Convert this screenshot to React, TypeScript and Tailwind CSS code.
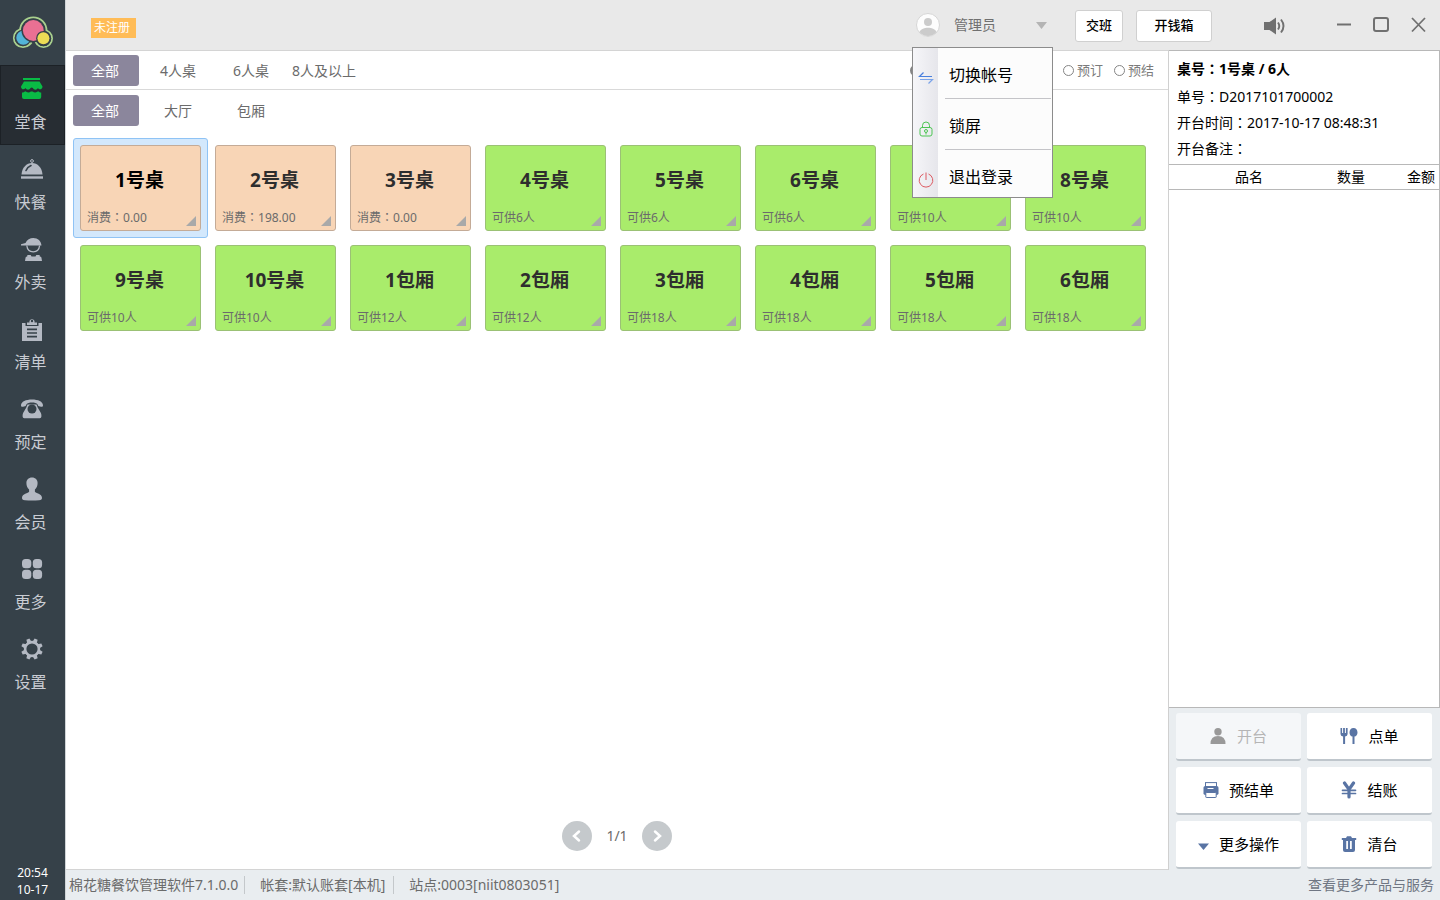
import React, { useState } from "react";

type IconProps = { className?: string };

const FONT = "font-['Noto_Sans','Noto_Sans_CJK_SC',sans-serif]";

/* ---------- sidebar icons ---------- */

const Logo = () => (
  <svg width="42" height="34" viewBox="0 0 42 34" aria-hidden="true">
    <g fill="#364149" stroke="#a9d08e" strokeWidth="1.8">
      <circle cx="11" cy="22" r="9.2" />
      <circle cx="31.5" cy="22.5" r="8.6" />
      <circle cx="21.3" cy="14.5" r="13.2" />
    </g>
    <circle cx="11" cy="22" r="8.3" fill="#364149" />
    <circle cx="31.5" cy="22.5" r="7.7" fill="#364149" />
    <rect x="18" y="24" width="7.5" height="6" fill="#364149" />
    <path d="M19.6 26.5a9.2 9.2 0 0 1-2.2 2.3M23.6 26a8.6 8.6 0 0 0 2.2 3" fill="none" stroke="#a9d08e" strokeWidth="1.8" />
    <circle cx="11.3" cy="21.8" r="7" fill="#52b4d8" />
    <circle cx="21.3" cy="14.5" r="11.8" fill="#364149" />
    <circle cx="21.3" cy="14.5" r="10.4" fill="#ea7093" />
    <circle cx="31.4" cy="22.2" r="7.3" fill="#364149" />
    <circle cx="31.4" cy="22.2" r="6" fill="#ecdc55" />
  </svg>
);

const ShopIcon = () => (
  <g>
    <path d="M3 1h17v2H3z" />
    <path d="M4 4.4h15.5l3 5.1c0 3-3.2 3.8-4.6 1.6-1 2.3-4 2.3-5 0l-1.2-.6-1.2.6c-1 2.3-4 2.3-5 0C4 13.3 1 12.500 1 9.500z" />
    <path d="M2 15.500c1.200 0 2.400-.4 3.200-1.200 1.800 1.500 4.200 1.500 5.600.2h1.800c1.400 1.300 4 1.300 5.600-.2.800.8 2 1.200 3 1.200V20q0 2-2 2H4q-2 0-2-2z" />
  </g>
);

const BellIcon = () => (
  <g>
    <circle cx="12" cy="4" r="1.400" fill="none" stroke="currentColor" />
    <path d="M1.500 17.500C2 10.500 6.500 6 12 6s10 4.500 10.500 11.500z" />
    <path d="M6 13.500q1.500-3.500 5-5" fill="none" stroke="#364149" strokeWidth="1.600" strokeLinecap="round" />
    <path d="M1 19.300h22v2.400H1z" />
  </g>
);

const CourierIcon = () => (
  <g>
    <path d="M1 8.600V7.300L5.500 6C7 2.500 10 1 13.300 1c4.500 0 8 3 8.200 7.600z" />
    <path d="M6.800 8.500c.4 4 3 6.300 6.400 6.300s6-2.300 6.400-6.300" fill="none" stroke="currentColor" strokeWidth="1.300" />
    <path d="M5 24l.6-3.500q.3-1 1.600-1l.2-1.500h3.300l.8 1.500h4l.8-1.500h3.300l.2 1.500q1.300 0 1.600 1L22 24z" />
  </g>
);

const ClipboardIcon = () => (
  <g>
    <path d="M2 6h3.500v3h13V6H22v18H2z" />
    <path d="M7 8V5.500h2.500a2.600 2.600 0 1 1 5 0H17V8z" />
    <circle cx="12" cy="4" r="1.200" fill="#364149" />
    <path d="M7 12.300h10M7 16h10M7 19.700h10" stroke="#364149" strokeWidth="1.700" />
  </g>
);

const PhoneIcon = () => (
  <g>
    <path d="M1 8.500C1 4.500 6 2.500 12 2.500s11 2 11 6c0 1-.8 1.500-2 1.200l-2-.5c-.9-.3-1.300-.8-1.300-1.700C16.500 6 14.500 5.500 12 5.500S7.500 6 6.300 7.500c0 .9-.4 1.400-1.300 1.700l-2 .5C1.800 10 1 9.500 1 8.500z" />
    <path d="M7.500 7.500h9l1.200 3 3.200 5.500q.5 1 .5 2.500v1q0 1.700-1.700 1.700H4.300q-1.700 0-1.700-1.700v-1q0-1.500.5-2.500l3.200-5.500z" />
    <circle cx="12" cy="12" r="4.500" fill="#364149" />
  </g>
);

const MemberIcon = () => (
  <path d="M12 .5c3.500 0 5.600 2.400 5.600 5.500 0 2.700-1 5-2.700 6.500v2.300c.7 1.500 7.100 2 7.100 6 0 1.500-.6 2.300-3 2.500-4.500.3-9.500.3-14 0-2.400-.2-3-1-3-2.500 0-4 6.400-4.500 7.100-6v-2.300C7.400 11 6.400 8.700 6.400 6 6.400 2.900 8.500.5 12 .5z" />
);

const MoreIcon = () => (
  <g>
    <rect x="2" y="2" width="9.300" height="9.300" rx="3.500" />
    <rect x="12.800" y="2" width="9.300" height="9.300" rx="3.500" />
    <rect x="2" y="12.800" width="9.300" height="9.300" rx="3.500" />
    <rect x="12.800" y="12.800" width="9.300" height="9.300" rx="3.500" />
  </g>
);

const GearIcon = () => (
  <g>
    <circle cx="12" cy="12" r="6.900" fill="none" stroke="currentColor" strokeWidth="2.600" />
    {[22.5, 67.5, 112.5, 157.5, 202.5, 247.5, 292.5, 337.5].map((a) => (
      <path key={a} d="M9.700 5.200l.7-4h3.200l.7 4z" transform={`rotate(${a} 12 12)`} />
    ))}
  </g>
);

const NAV: { label: string; icon: () => React.ReactElement }[] = [
  { label: "堂食", icon: ShopIcon },
  { label: "快餐", icon: BellIcon },
  { label: "外卖", icon: CourierIcon },
  { label: "清单", icon: ClipboardIcon },
  { label: "预定", icon: PhoneIcon },
  { label: "会员", icon: MemberIcon },
  { label: "更多", icon: MoreIcon },
  { label: "设置", icon: GearIcon },
];

function Sidebar() {
  const [active, setActive] = useState("堂食");
  return (
    <aside className="flex w-[65px] shrink-0 flex-col bg-[#364149]">
      <div className="flex h-[65px] items-center justify-center">
        <Logo />
      </div>
      <nav className="flex flex-col">
        {NAV.map(({ label, icon: Icon }) => {
          const on = label === active;
          return (
            <button
              key={label}
              type="button"
              onClick={() => setActive(label)}
              className={
                on
                  ? "flex h-20 flex-col items-center gap-[9px] border border-[#1c2126] bg-[#272d33] pt-[11px] pr-[2px] text-[#c9ccd3]"
                  : "flex h-20 flex-col items-center gap-[9px] border border-transparent pt-[11px] pr-[2px] text-[#c9ccd3]"
              }
            >
              <svg
                width="24"
                height="24"
                viewBox="0 0 24 24"
                fill="currentColor"
                aria-hidden="true"
                className={on ? "text-[#09bb45]" : "text-[#b4b9c3]"}
              >
                <Icon />
              </svg>
              <span className="pr-[2px] text-base leading-6">{label}</span>
            </button>
          );
        })}
      </nav>
      <div className="mt-auto pb-[2px] text-center text-xs leading-[17px] text-white">
        <div>20:54</div>
        <div>10-17</div>
      </div>
    </aside>
  );
}

/* ---------- header ---------- */

const SwapIcon = () => (
  <svg width="16" height="16" viewBox="0 0 16 16" fill="none" strokeWidth="1.200" aria-hidden="true">
    <path d="M14 6.500H1.500L5.500 2.500" stroke="#4a80dd" />
    <path d="M2 9.500h12.500l-4 4" stroke="#7aa4ea" />
  </svg>
);

const LockIcon = () => (
  <svg width="16" height="16" viewBox="0 0 16 16" fill="none" stroke="#4cc552" aria-hidden="true">
    <rect x="2" y="6.500" width="12" height="8.500" rx="2" />
    <path d="M4.500 6.500V4.500a3.500 3.500 0 0 1 7 0v2" />
    <circle cx="8" cy="10" r="1.500" />
    <path d="M8 11.500v2" />
  </svg>
);

const PowerIcon = () => (
  <svg width="16" height="16" viewBox="0 0 16 16" fill="none" stroke="#dc5a62" aria-hidden="true">
    <path d="M5.500 2a6.800 6.800 0 1 0 5 0M8 .5v7.500" />
  </svg>
);

const MENU = [
  { label: "切换帐号", icon: SwapIcon },
  { label: "锁屏", icon: LockIcon },
  { label: "退出登录", icon: PowerIcon },
];

function UserMenu() {
  return (
    <div className="relative w-[141px]">
      <button type="button" className="flex h-[50px] w-full items-center pr-[6px] pl-1 text-sm text-[#707070]">
        <svg width="24" height="24" viewBox="0 0 24 24" aria-hidden="true">
          <circle cx="12" cy="12" r="11.500" fill="#fdfdfd" stroke="#d6d6d6" />
          <circle cx="12" cy="9" r="4" fill="#cbcbcb" />
          <path d="M3.500 19C5 15.800 8.500 14.800 12 14.800s7 1 8.500 4.200a11 11 0 0 1-17 0z" fill="#cbcbcb" />
        </svg>
        <span className="ml-[14px]">管理员</span>
        <svg className="ml-auto" width="11" height="7" viewBox="0 0 11 7" fill="#b4b4b4" aria-hidden="true">
          <path d="M0 0h11L5.500 7z" />
        </svg>
      </button>
      <ul className="absolute top-[47px] left-0 z-10 w-[141px] border border-[#8c8c8c] bg-[#fcfcfc] font-['Noto_Sans_CJK_SC',sans-serif]">
        {MENU.map(({ label, icon: Icon }, i) => (
          <li key={label} className="pr-px">
            <button type="button" className="flex w-full text-left text-base leading-6 text-black">
              <span className="flex w-[25px] justify-center bg-linear-to-r from-[#f6f6f9] to-[#e6e6eb] pt-[22px]">
                <Icon />
              </span>
              <span
                className={
                  i < MENU.length - 1
                    ? "ml-[7px] h-[51px] flex-1 border-b border-[#c4c4c8] pt-[14px] pl-1"
                    : "ml-[7px] h-[47px] flex-1 pt-[14px] pl-1"
                }
              >
                {label}
              </span>
            </button>
          </li>
        ))}
      </ul>
    </div>
  );
}

function Header() {
  return (
    <header className="flex h-[50px] shrink-0 items-center bg-[#e9e9e9] pr-3 pl-[25px]">
      <span className="mt-[6px] flex h-5 w-[45px] items-center bg-[#ffbc57] pl-[3px] text-xs text-white">未注册</span>
      <div className="ml-auto flex items-center">
        <UserMenu />
        <button type="button" className="mt-[2px] ml-[22px] h-8 w-12 rounded-[3px] border border-[#d0d0d0] bg-white text-[13px] font-medium text-black">
          交班
        </button>
        <button type="button" className="mt-[2px] ml-[13px] h-8 w-[76px] rounded-[3px] border border-[#d0d0d0] bg-white text-[13px] font-medium text-black">
          开钱箱
        </button>
        <button type="button" aria-label="音量" className="mt-[2px] ml-[51px]">
          <svg width="24" height="20" viewBox="0 0 24 20" aria-hidden="true">
            <path d="M1 6h5.500L13 1.500v17L6.500 14H1z" fill="#707070" />
            <path d="M15 6.500q2.500 3.500 0 7M18 3.500q5 6.500 0 13" fill="none" stroke="#707070" strokeWidth="1.900" />
          </svg>
        </button>
        <button type="button" aria-label="最小化" className="ml-[49px]">
          <svg width="16" height="18" viewBox="0 0 16 18" aria-hidden="true">
            <path d="M1 8.500h14" stroke="#707070" strokeWidth="2" />
          </svg>
        </button>
        <button type="button" aria-label="最大化" className="ml-[20px]">
          <svg width="18" height="18" viewBox="0 0 18 18" aria-hidden="true">
            <rect x="2" y="2" width="14" height="13" rx="2" fill="none" stroke="#707070" strokeWidth="2" />
          </svg>
        </button>
        <button type="button" aria-label="关闭" className="ml-[20px]">
          <svg width="18" height="18" viewBox="0 0 18 18" aria-hidden="true">
            <path d="M2 2l13 13.500M15 2L2 15.500" stroke="#707070" strokeWidth="1.800" />
          </svg>
        </button>
      </div>
    </header>
  );
}

/* ---------- table floor ---------- */

function Tabs({ items }: { items: string[] }) {
  const [active, setActive] = useState(0);
  return (
    <div className="flex gap-[7px]">
      {items.map((t, i) => (
        <button
          key={t}
          type="button"
          onClick={() => setActive(i)}
          className={
            i === active
              ? "h-[31px] w-[66px] rounded-[3px] bg-[#8b869c] pr-[2px] text-sm whitespace-nowrap text-white"
              : "h-[31px] w-[66px] rounded-[3px] pr-[2px] text-sm whitespace-nowrap text-[#6b6b6b]"
          }
        >
          {t}
        </button>
      ))}
    </div>
  );
}

const RADIO =
  "h-[11px] w-[11px] appearance-none rounded-full border border-[#858585] bg-white checked:border-[3px]";

/* The full-width colon sits in the middle of its box in the JP face. */
const Colon = () => <span className="font-['Noto_Sans_CJK_JP',sans-serif] leading-none" lang="ja">：</span>;

type Table = { name: string; spent?: string; seats?: number };

const TABLES: Table[] = [
  { name: "1号桌", spent: "0.00" },
  { name: "2号桌", spent: "198.00" },
  { name: "3号桌", spent: "0.00" },
  { name: "4号桌", seats: 6 },
  { name: "5号桌", seats: 6 },
  { name: "6号桌", seats: 6 },
  { name: "7号桌", seats: 10 },
  { name: "8号桌", seats: 10 },
  { name: "9号桌", seats: 10 },
  { name: "10号桌", seats: 10 },
  { name: "1包厢", seats: 12 },
  { name: "2包厢", seats: 12 },
  { name: "3包厢", seats: 18 },
  { name: "4包厢", seats: 18 },
  { name: "5包厢", seats: 18 },
  { name: "6包厢", seats: 18 },
];

function TableCard({ table, selected, onSelect }: { table: Table; selected: boolean; onSelect: () => void }) {
  return (
    <button
      type="button"
      onClick={onSelect}
      className={
        selected
          ? "h-[100px] w-[135px] rounded-[3px] border border-[#8fc3f5] bg-[#d3e8fc] p-[6px] text-black"
          : "h-[100px] w-[135px] rounded-[3px] border border-transparent p-[6px] text-[#2e2e2e]"
      }
    >
      <span
        className={
          table.spent
            ? "flex h-full flex-col rounded-[3px] border border-[#c4ab97] bg-[#f8d5b6]"
            : "flex h-full flex-col rounded-[3px] border border-[#9bc175] bg-[#a9ec6b]"
        }
      >
        <span className="pt-5 pr-[2px] text-center text-[19px] leading-7 font-bold">{table.name}</span>
        <span className="mt-auto flex items-end justify-between pr-1 pb-1 pl-[6px] text-xs leading-4 text-[#6b6b6b]">
          <span>
            {table.spent ? (
              <>
                消费
                <Colon />
                {table.spent}
              </>
            ) : (
              `可供${table.seats}人`
            )}
          </span>
          <svg width="10" height="10" viewBox="0 0 10 10" fill="#a9a9a9" aria-hidden="true">
            <path d="M10 0v10H0z" />
          </svg>
        </span>
      </span>
    </button>
  );
}

function PageButton({ label, d }: { label: string; d: string }) {
  return (
    <button type="button" aria-label={label} className="flex h-[30px] w-[30px] items-center justify-center rounded-full bg-[#c5c9cc]">
      <svg width="14" height="14" viewBox="0 0 14 14" fill="none" stroke="#fff" strokeWidth="2.500" strokeLinecap="round" aria-hidden="true">
        <path d={d} />
      </svg>
    </button>
  );
}

function Floor() {
  const [selected, setSelected] = useState(0);
  return (
    <main className="flex min-w-0 flex-1 flex-col border-t border-b border-[#d4d4d4] bg-white">
      <div className="flex items-center justify-between border-b border-[#d9d9d9] pt-1 pr-[14px] pb-[3px] pl-[7px]">
        <Tabs items={["全部", "4人桌", "6人桌", "8人及以上"]} />
        <fieldset className="flex items-center text-[13px] text-[#7b7b7b]">
          <input type="radio" name="state" defaultChecked aria-label="全部" className={`${RADIO} mr-[142px]`} />
          <label className="flex items-center gap-[3px]">
            <input type="radio" name="state" className={RADIO} />
            预订
          </label>
          <label className="ml-[11px] flex items-center gap-[3px]">
            <input type="radio" name="state" className={RADIO} />
            预结
          </label>
        </fieldset>
      </div>
      <div className="pt-[5px] pl-[7px]">
        <Tabs items={["全部", "大厅", "包厢"]} />
      </div>
      <div className="flex flex-1 flex-wrap content-start pt-3 pr-[7px] pl-[7px]">
        {TABLES.map((t, i) => (
          <TableCard key={t.name} table={t} selected={i === selected} onSelect={() => setSelected(i)} />
        ))}
      </div>
      <div className="flex items-center justify-center gap-[14px] pb-[18px] text-sm text-[#6b6b6b]">
        <PageButton label="上一页" d="M9 2.500L4 7l5 4.500" />
        <span>1/1</span>
        <PageButton label="下一页" d="M5 2.500L10 7l-5 4.500" />
      </div>
    </main>
  );
}

/* ---------- order panel ---------- */

const PersonIcon = ({ className }: IconProps) => (
  <svg className={className} width="16" height="16" viewBox="0 0 16 16" fill="currentColor" aria-hidden="true">
    <circle cx="8" cy="3.700" r="3.700" />
    <path d="M.5 16q0-8 7.500-8t7.500 8z" />
  </svg>
);

const CutleryIcon = ({ className }: IconProps) => (
  <svg className={className} width="18" height="16" viewBox="0 0 18 16" fill="currentColor" aria-hidden="true">
    <path d="M.5 0h1.600v5h1V0h1.800v5h1V0h1.700v6q0 2.200-2.500 2.600V16H3.100V8.600Q.5 8.200.5 6z" />
    <path d="M13.500 0c2.500 0 4 2.100 4 4.400 0 2.200-1.200 3.700-3 4.200V16h-2V8.600c-1.800-.5-3-2-3-4.200 0-2.300 1.500-4.400 4-4.400z" />
  </svg>
);

const PrintIcon = ({ className }: IconProps) => (
  <svg className={className} width="16" height="16" viewBox="0 0 16 16" fill="currentColor" aria-hidden="true">
    <rect x="2.500" y=".6" width="11" height="5" fill="#fff" stroke="currentColor" />
    <rect x=".5" y="4" width="15" height="9" rx="1.800" />
    <path d="M4.500 6.500h6" stroke="#fff" />
    <rect x="2.800" y="10.500" width="10.400" height="5" rx=".5" fill="#fff" stroke="currentColor" />
  </svg>
);

const YenIcon = ({ className }: IconProps) => (
  <svg className={className} width="16" height="18" viewBox="0 0 16 18" fill="none" stroke="currentColor" aria-hidden="true">
    <path d="M3.500 2L8 8.500 12.500 2M8 8.500V16" strokeWidth="3.200" strokeLinecap="round" />
    <path d="M1.500 9.300h13M1.500 12.500h13" strokeWidth="1.700" strokeLinecap="round" />
  </svg>
);

const CaretIcon = ({ className }: IconProps) => (
  <svg className={className} width="11" height="7" viewBox="0 0 11 7" fill="currentColor" aria-hidden="true">
    <path d="M0 .5h11L5.500 7z" />
  </svg>
);

const TrashIcon = ({ className }: IconProps) => (
  <svg className={className} width="16" height="16" viewBox="0 0 16 16" fill="currentColor" aria-hidden="true">
    <path d="M.8 2H5l1-1.800h4L11 2h4.200v2H.8z" />
    <path d="M2 4h12v10q0 2-2 2H4q-2 0-2-2z" />
    <path d="M6.100 5v8M9.900 5v8" stroke="#fff" strokeWidth="1.700" />
  </svg>
);

const ACTIONS: { label: string; icon: (p: IconProps) => React.ReactElement; disabled?: boolean; caret?: boolean }[] = [
  { label: "开台", icon: PersonIcon, disabled: true },
  { label: "点单", icon: CutleryIcon },
  { label: "预结单", icon: PrintIcon },
  { label: "结账", icon: YenIcon },
  { label: "更多操作", icon: CaretIcon, caret: true },
  { label: "清台", icon: TrashIcon },
];

function OrderPanel() {
  return (
    <section className="flex w-[272px] shrink-0 flex-col border-l border-[#d0d0d0]">
      <div className="flex flex-1 flex-col border-t border-r border-b border-[#b8b8b8] bg-white text-sm text-black">
        <div className="px-2 pt-[5px] pb-[2px] leading-[26px]">
          <h2 className="mb-[2px] font-bold">
            桌号
            <Colon />
            1号桌 / 6人
          </h2>
          <p>
            单号
            <Colon />
            D2017101700002
          </p>
          <p>
            开台时间
            <Colon />
            2017-10-17 08:48:31
          </p>
          <p>
            开台备注
            <Colon />
          </p>
        </div>
        <table className="w-full table-fixed border-collapse">
          <thead>
            <tr className="h-[25px] border-t border-b border-[#b8b8b8] leading-6">
              <th className="p-0 font-normal">品名</th>
              <th className="w-11 p-0 font-normal">数量</th>
              <th className="w-[66px] p-0 pr-1 text-right font-normal">金额</th>
            </tr>
          </thead>
          <tbody />
        </table>
      </div>
      <div className="grid grid-cols-2 gap-x-[6px] gap-y-[6px] bg-[#e9edf0] pt-[5px] pr-2 pb-px pl-[7px]">
        {ACTIONS.map(({ label, icon: Icon, disabled, caret }) => (
          <button
            key={label}
            type="button"
            disabled={disabled}
            className={
              disabled
                ? "flex h-12 items-center justify-center gap-[11px] rounded-[3px] border-b-2 border-[#bfc6cc] bg-[#f5f7f9] text-[15px] text-[#b5b5b5]"
                : "flex h-12 items-center justify-center gap-[10px] rounded-[3px] border-b-2 border-[#bfc6cc] bg-white text-[15px] text-black"
            }
          >
            <Icon className={disabled ? "text-[#999999]" : caret ? "mt-1 text-[#5974a4]" : "text-[#5974a4]"} />
            <span>{label}</span>
          </button>
        ))}
      </div>
    </section>
  );
}

/* ---------- page ---------- */

function StatusBar() {
  return (
    <footer className="flex h-[30px] shrink-0 items-center bg-[#e9edf0] pr-[6px] pl-[3px] text-sm text-[#6b6b6b]">
      <span>棉花糖餐饮管理软件7.1.0.0</span>
      <span className="ml-[6px] h-[18px] border-l border-[#c4c8cb]" />
      <span className="ml-[15px]">帐套:默认账套[本机]</span>
      <span className="ml-2 h-[18px] border-l border-[#c4c8cb]" />
      <span className="ml-[15px]">站点:0003[niit0803051]</span>
      <a href="#more" className="ml-auto text-[#6f7683]">
        查看更多产品与服务
      </a>
    </footer>
  );
}

export default function App() {
  return (
    <div className={`flex min-h-screen bg-[#e9edf0] ${FONT}`} lang="zh-CN">
      <Sidebar />
      <div className="flex min-w-0 flex-1 flex-col border-l border-[#d0d4d7]">
        <Header />
        <div className="flex flex-1">
          <Floor />
          <OrderPanel />
        </div>
        <StatusBar />
      </div>
    </div>
  );
}
